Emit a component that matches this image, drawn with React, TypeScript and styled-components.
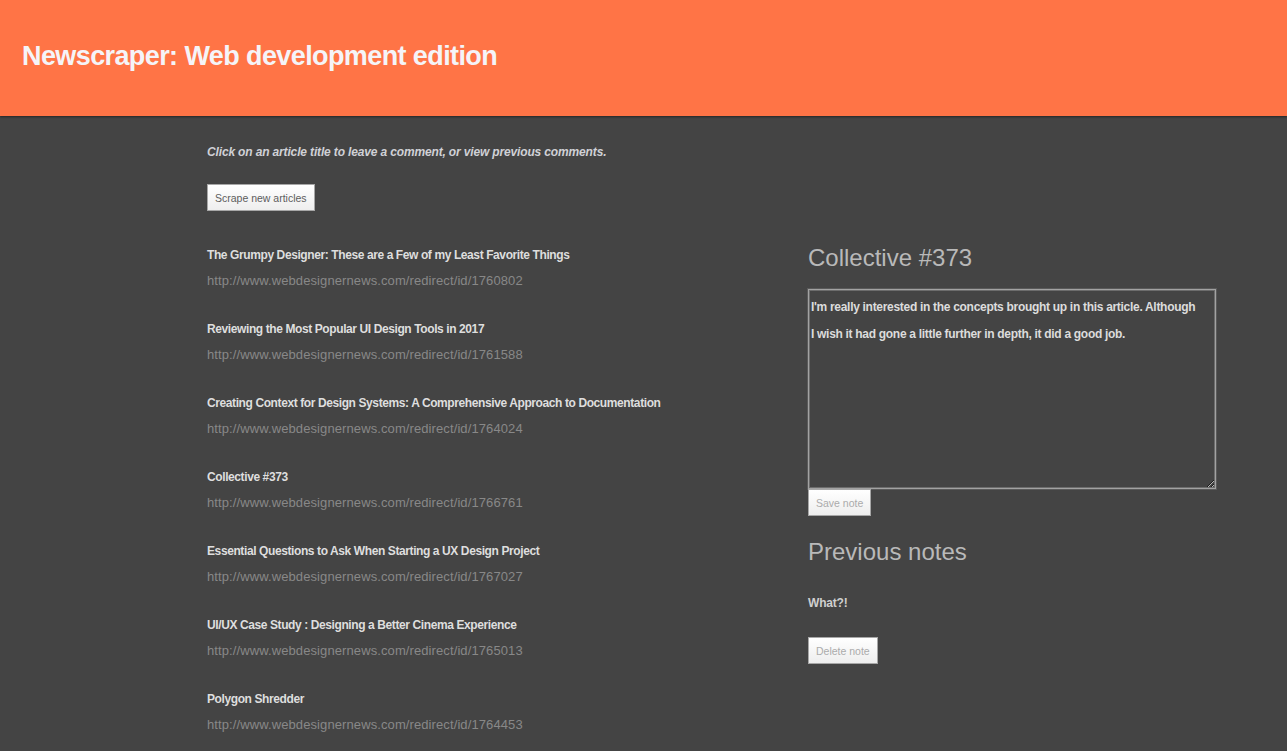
import React from "react";
import styled, { createGlobalStyle } from "styled-components";

const GlobalStyle = createGlobalStyle`
  html, body {
    margin: 0;
    padding: 0;
    background: #444444;
  }
  body {
    font-family: "Liberation Sans", Arial, sans-serif;
    color: #cfcfcf;
  }
  * { box-sizing: border-box; }
`;

const Header = styled.header`
  height: 116px;
  background: #ff7446;
  display: flex;
  align-items: center;
  padding: 0 22px 4px;
  box-shadow: 0 1px 2px rgba(0, 0, 0, 0.45);
`;

const Title = styled.h1`
  margin: 0;
  font-size: 27px;
  font-weight: 700;
  letter-spacing: -0.6px;
  color: #f5f4f8;
`;

const Main = styled.main`
  padding: 26px 0 0 207px;
  display: flex;
  flex-direction: column;
  align-items: flex-start;
`;

const Intro = styled.p`
  margin: 0;
  font-style: italic;
  font-weight: 700;
  font-size: 12px;
  line-height: 20px;
  letter-spacing: -0.15px;
  color: #d0d1d6;
`;

const Button = styled.button<{ $muted?: boolean }>`
  font-family: inherit;
  font-size: 10.5px;
  height: 27px;
  padding: 0 7px;
  color: ${(p) => (p.$muted ? "#ababab" : "#5d5d5d")};
  background: linear-gradient(#ffffff, #eeeeee);
  border: 1px solid #a7a7a7;
  border-radius: 0;
  cursor: pointer;
`;

const ScrapeButton = styled(Button)`
  margin-top: 22px;
`;

const Columns = styled.div`
  margin-top: 35px;
  display: grid;
  grid-template-columns: 601px 408px;
`;

const ArticleList = styled.ul`
  list-style: none;
  margin: 0;
  padding: 0;
  display: flex;
  flex-direction: column;
  gap: 30px;
`;

const Article = styled.li`
  display: flex;
  flex-direction: column;
  gap: 8px;
`;

const ArticleTitle = styled.a`
  font-size: 12px;
  font-weight: 700;
  letter-spacing: -0.4px;
  line-height: 18px;
  color: #dedede;
  text-decoration: none;
`;

const ArticleUrl = styled.span`
  font-size: 13px;
  letter-spacing: 0.1px;
  line-height: 18px;
  color: #888888;
`;

const Side = styled.aside`
  display: flex;
  flex-direction: column;
  align-items: flex-start;
`;

const SideHeading = styled.h2<{ $gap?: number }>`
  margin: ${(p) => p.$gap ?? 0}px 0 0;
  font-size: 24px;
  font-weight: 400;
  line-height: 24px;
  color: #b9b9b9;
`;

const NoteArea = styled.textarea`
  margin-top: 19px;
  width: 408px;
  height: 200px;
  resize: both;
  background: #444444;
  border: 1px solid #a2a2a2;
  box-shadow: inset 0 0 0 1px #6c6c6c;
  outline: 1px solid #5a5a5a;
  padding: 4px 15px 2px 2px;
  font-family: inherit;
  font-weight: 700;
  font-size: 12px;
  letter-spacing: -0.3px;
  line-height: 27px;
  color: #dcdcdc;
`;

const NoteText = styled.p`
  margin: 30px 0 0;
  font-size: 12px;
  font-weight: 700;
  letter-spacing: -0.2px;
  line-height: 18px;
  color: #cfcfcf;
`;

const DeleteButton = styled(Button)`
  margin-top: 25px;
`;

const articles: [string, string][] = [
  ["The Grumpy Designer: These are a Few of my Least Favorite Things", "1760802"],
  ["Reviewing the Most Popular UI Design Tools in 2017", "1761588"],
  ["Creating Context for Design Systems: A Comprehensive Approach to Documentation", "1764024"],
  ["Collective #373", "1766761"],
  ["Essential Questions to Ask When Starting a UX Design Project", "1767027"],
  ["UI/UX Case Study : Designing a Better Cinema Experience", "1765013"],
  ["Polygon Shredder", "1764453"],
];

export default function App() {
  return (
    <>
      <GlobalStyle />
      <Header>
        <Title>Newscraper: Web development edition</Title>
      </Header>
      <Main>
        <Intro>Click on an article title to leave a comment, or view previous comments.</Intro>
        <ScrapeButton>Scrape new articles</ScrapeButton>
        <Columns>
          <ArticleList>
            {articles.map(([t, id]) => (
              <Article key={id}>
                <ArticleTitle href="#">{t}</ArticleTitle>
                <ArticleUrl>http://www.webdesignernews.com/redirect/id/{id}</ArticleUrl>
              </Article>
            ))}
          </ArticleList>
          <Side>
            <SideHeading>Collective #373</SideHeading>
            <NoteArea defaultValue="I'm really interested in the concepts brought up in this article. Although I wish it had gone a little further in depth, it did a good job." />
            <Button $muted>Save note</Button>
            <SideHeading $gap={24}>Previous notes</SideHeading>
            <NoteText>What?!</NoteText>
            <DeleteButton $muted>Delete note</DeleteButton>
          </Side>
        </Columns>
      </Main>
    </>
  );
}
